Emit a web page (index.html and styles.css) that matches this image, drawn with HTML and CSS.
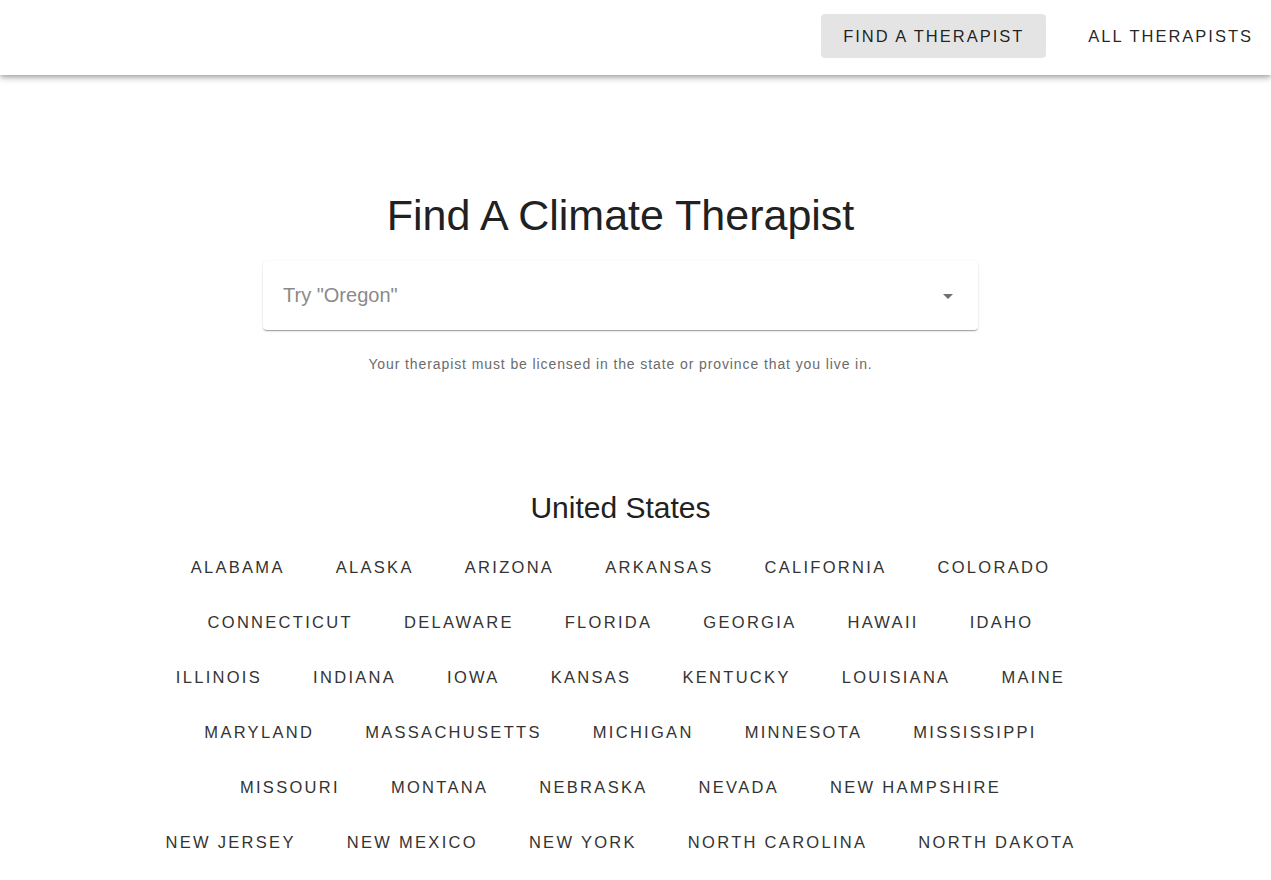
FILE: index.html
```html
<!DOCTYPE html>
<html lang="en">
<head>
    <meta charset="UTF-8">
    <meta name="viewport" content="width=device-width, initial-scale=1.0">
    <title>Find A Climate Therapist</title>
    <link rel="stylesheet" href="styles.css">
</head>
<body>
    <header class="topbar">
        <nav class="nav">
            <a class="nav-link active" href="#">Find A Therapist</a>
            <a class="nav-link" href="#">All Therapists</a>
        </nav>
    </header>

    <main class="page">
        <section class="search">
            <h1>Find A Climate Therapist</h1>
            <div class="select-box">
                <span class="placeholder">Try "Oregon"</span>
                <svg class="arrow" width="24" height="24" viewBox="0 0 24 24"><path d="M7 10l5 5 5-5z"/></svg>
            </div>
            <p class="hint">Your therapist must be licensed in the state or province that you live in.</p>
        </section>

        <section class="region">
            <h2>United States</h2>
            <div class="states">
                <a class="state" href="#">Alabama</a>
                <a class="state" href="#">Alaska</a>
                <a class="state" href="#">Arizona</a>
                <a class="state" href="#">Arkansas</a>
                <a class="state" href="#">California</a>
                <a class="state" href="#">Colorado</a>
                <a class="state" href="#">Connecticut</a>
                <a class="state" href="#">Delaware</a>
                <a class="state" href="#">Florida</a>
                <a class="state" href="#">Georgia</a>
                <a class="state" href="#">Hawaii</a>
                <a class="state" href="#">Idaho</a>
                <a class="state" href="#">Illinois</a>
                <a class="state" href="#">Indiana</a>
                <a class="state" href="#">Iowa</a>
                <a class="state" href="#">Kansas</a>
                <a class="state" href="#">Kentucky</a>
                <a class="state" href="#">Louisiana</a>
                <a class="state" href="#">Maine</a>
                <a class="state" href="#">Maryland</a>
                <a class="state" href="#">Massachusetts</a>
                <a class="state" href="#">Michigan</a>
                <a class="state" href="#">Minnesota</a>
                <a class="state" href="#">Mississippi</a>
                <a class="state" href="#">Missouri</a>
                <a class="state" href="#">Montana</a>
                <a class="state" href="#">Nebraska</a>
                <a class="state" href="#">Nevada</a>
                <a class="state" href="#">New Hampshire</a>
                <a class="state" href="#">New Jersey</a>
                <a class="state" href="#">New Mexico</a>
                <a class="state" href="#">New York</a>
                <a class="state" href="#">North Carolina</a>
                <a class="state" href="#">North Dakota</a>
                <a class="state" href="#">Ohio</a>
                <a class="state" href="#">Oklahoma</a>
                <a class="state" href="#">Oregon</a>
                <a class="state" href="#">Pennsylvania</a>
            </div>
        </section>
    </main>
</body>
</html>
```

FILE: styles.css
```css
body {
    margin: 0;
    font-family: 'Liberation Sans', Arial, sans-serif;
    color: rgba(0, 0, 0, 0.87);
    background: #fff;
    overflow: hidden;
}
.topbar {
    height: 75px;
    background: #fff;
    box-shadow: 0 2px 4px -1px rgba(0, 0, 0, 0.2), 0 4px 5px 0 rgba(0, 0, 0, 0.14), 0 1px 10px 0 rgba(0, 0, 0, 0.12);
    display: flex;
    justify-content: flex-end;
    align-items: flex-start;
    position: relative;
    z-index: 1;
}
.nav {
    display: flex;
    gap: 20px;
    margin-top: 14px;
    margin-right: -4px;
}
.nav-link {
    display: block;
    padding: 0 22px;
    height: 44px;
    line-height: 44px;
    font-size: 16.5px;
    letter-spacing: 2px;
    text-transform: uppercase;
    text-decoration: none;
    color: rgba(0, 0, 0, 0.87);
    border-radius: 4px;
}
.nav-link.active {
    background-color: #e4e4e4;
}
.page {
    width: 1241px;
}
.search {
    display: flex;
    flex-direction: column;
    align-items: center;
    padding-top: 112px;
}
h1 {
    margin: 0;
    font-size: 43px;
    font-weight: 400;
    line-height: 56px;
    color: #212121;
}
.select-box {
    margin-top: 18px;
    width: 715px;
    height: 69px;
    box-sizing: border-box;
    padding: 0 18px 0 20px;
    display: flex;
    align-items: center;
    justify-content: space-between;
    background: #fff;
    border-radius: 4px;
    box-shadow: 0 2px 1px -1px rgba(0, 0, 0, 0.2), 0 1px 1px 0 rgba(0, 0, 0, 0.14), 0 1px 3px 0 rgba(0, 0, 0, 0.12);
}
.placeholder {
    font-size: 20px;
    color: #8a8a8a;
}
.arrow {
    fill: #6f6f6f;
}
.hint {
    margin: 26px 0 0;
    font-size: 14px;
    letter-spacing: 0.9px;
    color: #6b6b6b;
}
.region {
    margin: 116px auto 0;
    width: 970px;
    text-align: center;
}
h2 {
    margin: 0;
    font-size: 30px;
    font-weight: 400;
    line-height: 40px;
    color: #212121;
}
.states {
    margin-top: 19px;
    display: flex;
    flex-wrap: wrap;
    justify-content: center;
    row-gap: 15px;
}
.state {
    display: block;
    padding: 0 25.5px;
    height: 40px;
    line-height: 40px;
    font-size: 16.5px;
    letter-spacing: 2.3px;
    text-transform: uppercase;
    text-decoration: none;
    color: #333;
}
```
